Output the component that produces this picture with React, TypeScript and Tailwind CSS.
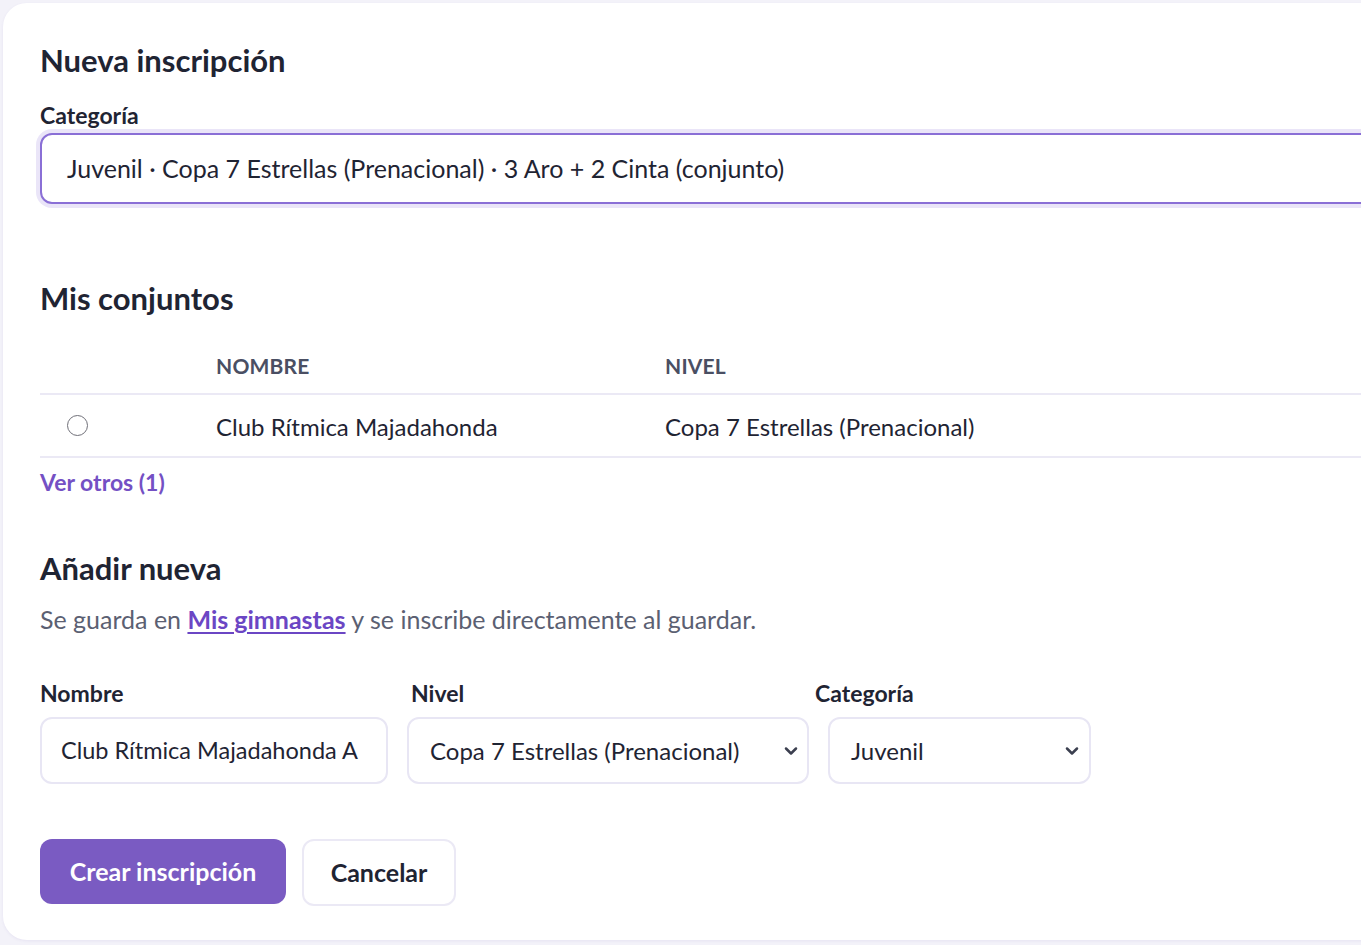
import React from 'react';
import { ChevronDown } from 'lucide-react';

const fieldBase =
  'h-[67px] w-full rounded-[12px] border-2 border-[#e8e6f4] bg-white px-[19px] text-[24px] text-[#1f2433] flex items-center';

const labelCls = 'text-[23px] font-bold leading-[28px] text-[#1f2433]';

export default function App() {
  return (
    <div className="h-[945px] w-[1361px] overflow-hidden bg-[#f3f2f9] pl-[3px] pt-[3px] font-['Lato',sans-serif]">
      <div className="h-[937px] w-[1420px] rounded-[24px] bg-white pl-[37px] pt-[39px] shadow-[0_1px_3px_rgba(90,70,160,0.08)]">
        <h1 className="text-[31px] font-bold leading-[36px] text-[#1f2433]">Nueva inscripción</h1>

        <div className={`mt-[23px] ${labelCls}`}>Categoría</div>
        <div className="mt-[4px] flex h-[71px] items-center rounded-[12px] border-2 border-[#8a6fd6] bg-white pl-[25px] text-[25px] text-[#1f2433] shadow-[0_0_0_4px_rgba(138,111,214,0.18)]">
          Juvenil · Copa 7 Estrellas (Prenacional) · 3 Aro + 2 Cinta (conjunto)
        </div>

        <h2 className="mt-[76px] text-[31px] font-bold leading-[36px] text-[#1f2433]">Mis conjuntos</h2>

        <table className="mt-[22px] w-full border-collapse text-left">
          <thead>
            <tr className="border-b-2 border-[#ebe9f5]">
              <th className="h-[56px] w-[176px]" />
              <th className="h-[56px] w-[449px] text-[21px] font-bold tracking-[0.2px] text-[#4a4f63]">NOMBRE</th>
              <th className="h-[56px] text-[21px] font-bold tracking-[0.2px] text-[#4a4f63]">NIVEL</th>
            </tr>
          </thead>
          <tbody>
            <tr className="border-b-2 border-[#ebe9f5]">
              <td className="h-[63px] pl-[27px]">
                <span className="block h-[21px] w-[21px] rounded-full border-[1.5px] border-[#6f6f78] bg-white" />
              </td>
              <td className="pt-[2px] text-[24px] text-[#1f2433]">Club Rítmica Majadahonda</td>
              <td className="pt-[2px] text-[24px] text-[#1f2433]">Copa 7 Estrellas (Prenacional)</td>
            </tr>
          </tbody>
        </table>

        <div className="mt-[10px] text-[23px] font-bold leading-[28px] text-[#7450c4]">Ver otros (1)</div>

        <h2 className="mt-[54px] text-[31px] font-bold leading-[36px] text-[#1f2433]">Añadir nueva</h2>
        <p className="mt-[18px] text-[25px] leading-[30px] text-[#5b6072]">
          Se guarda en{' '}
          <a className="font-bold text-[#6b46c4] underline underline-offset-[3px]">Mis gimnastas</a>{' '}
          y se inscribe directamente al guardar.
        </p>

        <div className="mt-[45px] flex items-start">
          <div className="w-[348px]">
            <div className={labelCls}>Nombre</div>
            <div className={`mt-[10px] !text-[23.5px] ${fieldBase}`}>Club Rítmica Majadahonda A</div>
          </div>
          <div className="ml-[19px] w-[402px]">
            <div className={`pl-[4px] ${labelCls}`}>Nivel</div>
            <div className={`mt-[10px] justify-between ${fieldBase}`}>
              <span className="pl-[2px]">Copa 7 Estrellas (Prenacional)</span>
              <ChevronDown className="mr-[-13px] h-[20px] w-[20px] text-[#3b3f4f]" strokeWidth={3} />
            </div>
          </div>
          <div className="ml-[19px] w-[263px]">
            <div className={`ml-[-13px] ${labelCls}`}>Categoría</div>
            <div className={`mt-[10px] justify-between ${fieldBase}`}>
              <span className="pl-[2px]">Juvenil</span>
              <ChevronDown className="mr-[-12px] h-[20px] w-[20px] text-[#3b3f4f]" strokeWidth={3} />
            </div>
          </div>
        </div>

        <div className="mt-[55px] flex gap-[16px]">
          <button className="h-[65px] w-[246px] rounded-[12px] bg-[#7a5bc2] text-[25px] font-bold text-white">
            Crear inscripción
          </button>
          <button className="h-[67px] w-[154px] rounded-[12px] border-2 border-[#ebe9f5] bg-white text-[25px] font-bold text-[#1f2433]">
            Cancelar
          </button>
        </div>
      </div>
    </div>
  );
}
